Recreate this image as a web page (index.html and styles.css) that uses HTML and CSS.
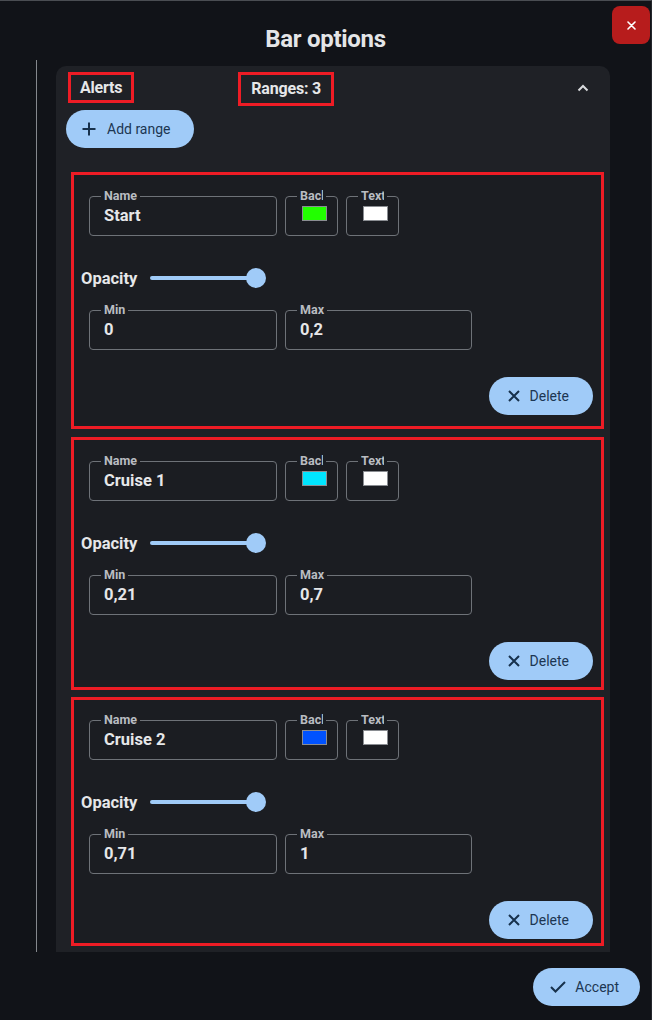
FILE: index.html
```html
<!DOCTYPE html>
<html lang="en">
<head>
<meta charset="utf-8">
<title>Bar options</title>
<link rel="stylesheet" href="styles.css">
</head>
<body>
<div class="dialog">
  <header class="dlg-head">
    <h1 class="title">Bar options</h1>
    <button class="close" aria-label="Close">
      <svg width="9" height="9" viewBox="0 0 9 9"><path d="M1 1L8 8M8 1L1 8" stroke="#fff" stroke-width="1.6" stroke-linecap="round"/></svg>
    </button>
  </header>

  <div class="dlg-body">
    <div class="rail"></div>
    <section class="panel">
      <div class="panel-head">
        <span class="mark mark-alerts">Alerts</span>
        <span class="mark mark-ranges">Ranges: 3</span>
        <svg class="chev" width="12" height="8" viewBox="0 0 12 8"><path d="M1.5 6.5L6 2L10.5 6.5" fill="none" stroke="#d8dadd" stroke-width="2"/></svg>
      </div>

      <button class="pill add">
        <svg width="14" height="14" viewBox="0 0 14 14"><path d="M7 0.5V13.5M0.5 7H13.5" stroke="#17314c" stroke-width="2"/></svg>
        <span>Add range</span>
      </button>

      <div class="card c1">
        <div class="row">
          <div class="field f-name"><span class="flabel">Name</span><span class="fval">Start</span></div>
          <div class="field f-swatch"><span class="flabel"><span class="clip">Back</span></span><span class="swatch sw-green"></span></div>
          <div class="field f-swatch"><span class="flabel"><span class="clip">Text</span></span><span class="swatch sw-white"></span></div>
        </div>
        <div class="opacity">
          <span class="olabel">Opacity</span>
          <div class="slider"><span class="track"></span><span class="thumb"></span></div>
        </div>
        <div class="row r-minmax">
          <div class="field f-name"><span class="flabel">Min</span><span class="fval">0</span></div>
          <div class="field f-max"><span class="flabel">Max</span><span class="fval">0,2</span></div>
        </div>
        <div class="actions">
          <button class="pill del">
            <svg width="12" height="12" viewBox="0 0 12 12"><path d="M1 1L11 11M11 1L1 11" stroke="#17314c" stroke-width="2"/></svg>
            <span>Delete</span>
          </button>
        </div>
      </div>

      <div class="card c2">
        <div class="row">
          <div class="field f-name"><span class="flabel">Name</span><span class="fval">Cruise 1</span></div>
          <div class="field f-swatch"><span class="flabel"><span class="clip">Back</span></span><span class="swatch sw-cyan"></span></div>
          <div class="field f-swatch"><span class="flabel"><span class="clip">Text</span></span><span class="swatch sw-white"></span></div>
        </div>
        <div class="opacity">
          <span class="olabel">Opacity</span>
          <div class="slider"><span class="track"></span><span class="thumb"></span></div>
        </div>
        <div class="row r-minmax">
          <div class="field f-name"><span class="flabel">Min</span><span class="fval">0,21</span></div>
          <div class="field f-max"><span class="flabel">Max</span><span class="fval">0,7</span></div>
        </div>
        <div class="actions">
          <button class="pill del">
            <svg width="12" height="12" viewBox="0 0 12 12"><path d="M1 1L11 11M11 1L1 11" stroke="#17314c" stroke-width="2"/></svg>
            <span>Delete</span>
          </button>
        </div>
      </div>

      <div class="card c3">
        <div class="row">
          <div class="field f-name"><span class="flabel">Name</span><span class="fval">Cruise 2</span></div>
          <div class="field f-swatch"><span class="flabel"><span class="clip">Back</span></span><span class="swatch sw-blue"></span></div>
          <div class="field f-swatch"><span class="flabel"><span class="clip">Text</span></span><span class="swatch sw-white"></span></div>
        </div>
        <div class="opacity">
          <span class="olabel">Opacity</span>
          <div class="slider"><span class="track"></span><span class="thumb"></span></div>
        </div>
        <div class="row r-minmax">
          <div class="field f-name"><span class="flabel">Min</span><span class="fval">0,71</span></div>
          <div class="field f-max"><span class="flabel">Max</span><span class="fval">1</span></div>
        </div>
        <div class="actions">
          <button class="pill del">
            <svg width="12" height="12" viewBox="0 0 12 12"><path d="M1 1L11 11M11 1L1 11" stroke="#17314c" stroke-width="2"/></svg>
            <span>Delete</span>
          </button>
        </div>
      </div>
    </section>
  </div>

  <footer class="dlg-foot">
    <button class="pill accept">
      <svg width="16" height="12" viewBox="0 0 16 12"><path d="M1 6L5.5 10.5L15 1" fill="none" stroke="#17314c" stroke-width="2"/></svg>
      <span>Accept</span>
    </button>
  </footer>
</div>
</body>
</html>
```

FILE: styles.css
```css
* { box-sizing: border-box; }

html, body {
  margin: 0;
  padding: 0;
  background: #111318;
}

body {
  font-family: Roboto, "Liberation Sans", Arial, sans-serif;
  color: #e3e4e6;
  width: 652px;
  height: 1020px;
  overflow: hidden;
}

.dialog {
  position: relative;
  width: 652px;
  height: 1020px;
  border-top: 1px solid #4a4d52;
  border-right: 1px solid #24272c;
  display: flex;
  flex-direction: column;
}

.dlg-head {
  height: 59px;
  display: flex;
  justify-content: center;
}

.title {
  margin: 24px 0 0 0;
  font-size: 24px;
  line-height: 28px;
  font-weight: 700;
  color: #e4e5e7;
  letter-spacing: -0.3px;
}

.close {
  position: absolute;
  top: 5px;
  right: 1px;
  width: 38px;
  height: 38px;
  border: none;
  border-radius: 8px;
  background: #b71c1c;
  display: flex;
  align-items: center;
  justify-content: center;
  padding: 0;
}

.dlg-body {
  height: 892px;
  display: flex;
  align-items: flex-start;
}

.rail {
  margin-left: 36px;
  width: 1px;
  height: 892px;
  background: #85888d;
}

.panel {
  margin-left: 19px;
  margin-top: 6px;
  width: 554px;
  height: 886px;
  background: #1f2126;
  border-radius: 10px 10px 0 0;
  overflow: hidden;
  display: flex;
  flex-direction: column;
  align-items: flex-start;
}

.panel-head {
  width: 100%;
  height: 40px;
  padding-top: 6px;
  display: flex;
  align-items: flex-start;
}

.mark {
  border: 3px solid #ee1c25;
  font-size: 16px;
  font-weight: 700;
  color: #e6e7e9;
  white-space: nowrap;
  letter-spacing: -0.2px;
}

.mark-alerts {
  margin-left: 12px;
  padding: 0 9px;
  height: 31px;
  line-height: 25px;
}

.mark-ranges {
  margin-left: 104px;
  padding: 0 10px;
  height: 34px;
  line-height: 28px;
}

.chev {
  margin-left: auto;
  margin-right: 21px;
  margin-top: 12px;
}

.pill {
  border: none;
  border-radius: 19px;
  height: 38px;
  background: #a0cbf8;
  color: #1c3652;
  font-family: Roboto, "Liberation Sans", Arial, sans-serif;
  font-size: 14px;
  font-weight: 400;
  display: flex;
  align-items: center;
  padding: 0;
  white-space: nowrap;
}

.add {
  margin-left: 10px;
  margin-top: 4px;
  padding-left: 16px;
  padding-right: 23px;
  gap: 11px;
}

.card {
  margin-left: 15px;
  width: 533px;
  border: 3px solid #ee1c25;
  background: #1b1d22;
  padding-left: 15px;
  padding-right: 8px;
  flex-shrink: 0;
}

.c1 { margin-top: 24px; padding-top: 21px; padding-bottom: 11px; }
.c2 { margin-top: 8px; padding-top: 21px; padding-bottom: 7px; }
.c3 { margin-top: 7px; padding-top: 20px; padding-bottom: 4px; }

.row {
  display: flex;
  gap: 8px;
  height: 40px;
}

.field {
  position: relative;
  height: 40px;
  border: 1px solid #6e7278;
  border-radius: 4px;
  display: flex;
}

.flabel {
  position: absolute;
  top: -8px;
  left: 11px;
  padding: 0 3px;
  background: #1b1d22;
  font-size: 12.5px;
  line-height: 14px;
  font-weight: 700;
  color: #b9bcc1;
  white-space: nowrap;
}

.clip {
  display: block;
  width: 23px;
  overflow: hidden;
}

.fval {
  padding-left: 14px;
  font-size: 16.5px;
  font-weight: 700;
  line-height: 37px;
  color: #e6e7e9;
}

.f-name { width: 188px; }
.f-max { width: 187px; }

.f-swatch {
  width: 53px;
  padding-left: 16px;
  padding-top: 9px;
}

.swatch {
  display: block;
  width: 25px;
  height: 15px;
  border: 1px solid #8a8d92;
}

.sw-green { background: #22ff00; }
.sw-cyan { background: #00e5ff; }
.sw-blue { background: #0052ff; }
.sw-white { background: #ffffff; }

.opacity {
  margin-top: 30px;
  margin-left: -8px;
  height: 24px;
  display: flex;
  align-items: center;
}

.olabel {
  font-size: 16.5px;
  font-weight: 700;
  color: #e6e7e9;
}

.slider {
  margin-left: 13px;
  display: flex;
  align-items: center;
}

.track {
  display: block;
  width: 106px;
  height: 4px;
  border-radius: 2px;
  background: #a0cbf8;
}

.thumb {
  display: block;
  width: 20px;
  height: 20px;
  margin-left: -10px;
  border-radius: 50%;
  background: #a0cbf8;
}

.r-minmax { margin-top: 20px; }

.actions {
  margin-top: 27px;
  display: flex;
  justify-content: flex-end;
}

.del {
  padding-left: 19px;
  padding-right: 24px;
  gap: 10px;
}

.dlg-foot {
  flex: 1;
  display: flex;
  justify-content: flex-end;
  align-items: flex-start;
  padding-right: 11px;
}

.accept {
  margin-top: 16px;
  padding-left: 17px;
  padding-right: 21px;
  gap: 9px;
}
```
